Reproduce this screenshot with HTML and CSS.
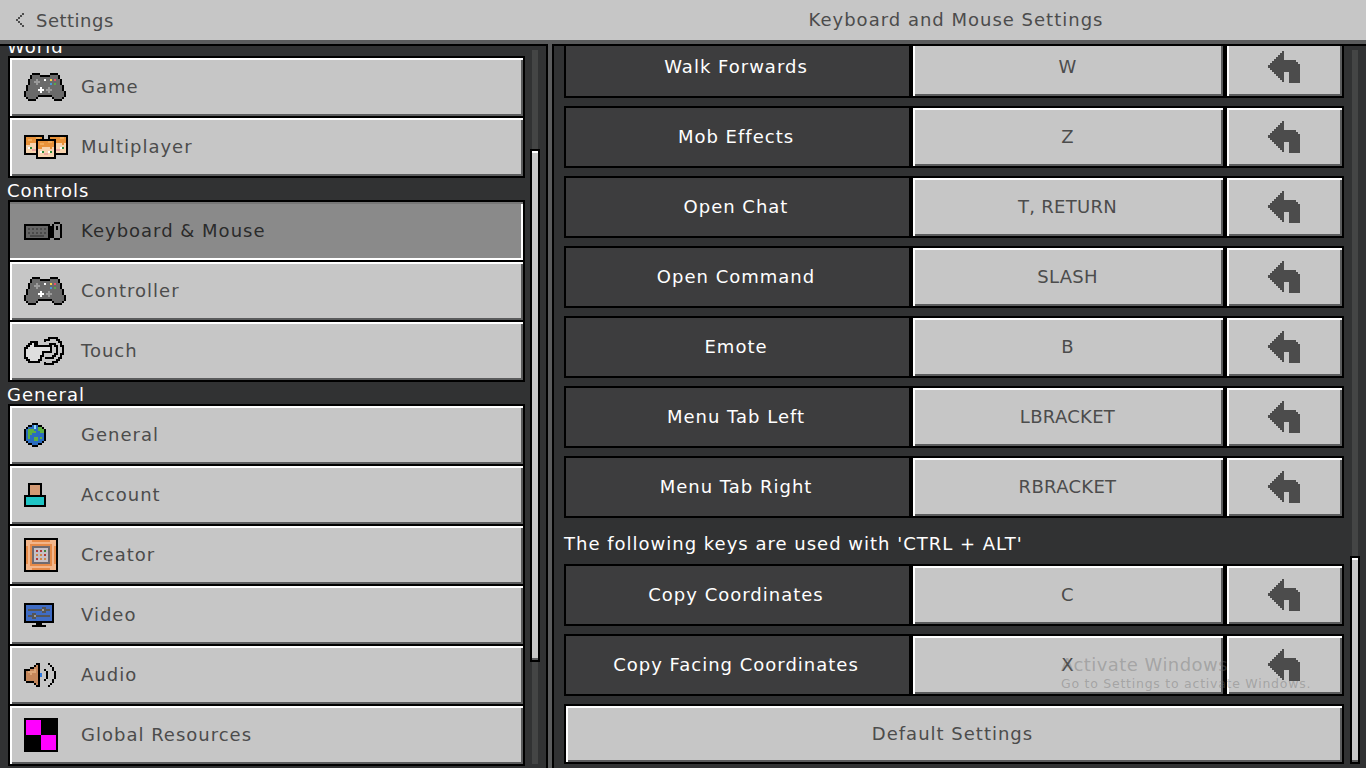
FILE: index.html
```html
<!DOCTYPE html>
<html lang="en">
<head>
<meta charset="utf-8">
<title>Keyboard and Mouse Settings</title>
<link rel="stylesheet" href="styles.css">
</head>
<body>
<svg class="defs" aria-hidden="true">
  <symbol id="pad" viewBox="0 0 21 14">
    <path fill="#000" d="M4 0H8V1H13V0H17V1H18V3H19V6H20V9H21V12H20V13H19V14H15V13H14V12H7V13H6V14H2V13H1V12H0V9H1V6H2V3H3V1H4Z"/>
    <path fill="#6a6a6a" d="M4 1H8V2H13V1H17V3H18V6H19V9H20V12H19V13H15V12H14V11H7V12H6V13H2V12H1V9H2V6H3V3H4Z"/>
    <path fill="#9a9a9a" d="M6 3H7V4H8V5H7V6H6V5H5V4H6ZM12 7H13V8H14V9H13V10H12V9H11V8H12Z"/>
    <path fill="#fff" d="M8 7H9V8H10V9H9V10H8V9H7V8H8ZM10 3H11V4H10Z"/>
    <path fill="#f4d84a" d="M13 3H14V4H13Z"/>
    <path fill="#e8506a" d="M15 3H16V4H15Z"/>
    <path fill="#4a9ad8" d="M13 5H14V6H13Z"/>
    <path fill="#5aa84a" d="M15 5H16V6H15Z"/>
  </symbol>
  <symbol id="alex" viewBox="0 0 10 10">
    <path fill="#000" d="M0 0H10V10H0Z"/>
    <path fill="#f7d3ae" d="M1 1H9V9H1Z"/>
    <path fill="#e8923a" d="M1 1H9V4H8V5H7V4H3V5H1Z"/>
    <path fill="#f2ac5a" d="M2 2H4V3H2ZM6 1H8V2H6Z"/>
    <path fill="#fff" d="M2 6H3V7H2ZM6 6H7V7H6Z"/>
    <path fill="#2f8a3c" d="M3 6H4V7H3ZM7 6H8V7H7Z"/>
    <path fill="#eba7a0" d="M4 7H6V8H4Z"/>
  </symbol>
  <symbol id="back" viewBox="0 0 32 32">
    <path d="M0 14H2V12H4V10H6V8H8V6H10V4H12V2H14V0H16V9H28V11H30V13H32V32H21V21H16V31H14V29H12V27H10V25H8V23H6V21H4V19H2V17H0Z"/>
  </symbol>
</svg>

<header class="topbar">
  <div class="topbar-back">
    <svg class="chevron" viewBox="0 0 8 14"><path d="M6 0H8V2H6V4H4V6H2V8H4V10H6V12H8V14H6V12H4V10H2V8H0V6H2V4H4V2H6Z"/></svg>
    <span>Settings</span>
  </div>
  <div class="topbar-title">Keyboard and Mouse Settings</div>
</header>

<main class="panels">
  <aside class="sidebar">
    <div class="sidebar-scroll">
      <div class="group-label">World</div>
      <div class="group">
        <div class="nav"><span class="nav-icon"><svg class="i-pad"><use href="#pad"/></svg></span>Game</div>
        <div class="nav"><span class="nav-icon"><svg class="i-faces" viewBox="0 0 22 12"><use href="#alex" x="0" y="0" width="10" height="10"/><use href="#alex" x="12" y="0" width="10" height="10"/><use href="#alex" x="6" y="2" width="10" height="10"/></svg></span>Multiplayer</div>
      </div>
      <div class="group-label">Controls</div>
      <div class="group">
        <div class="nav nav-active"><span class="nav-icon"><svg class="i-keys" viewBox="0 0 38 18">
          <path fill="#000" d="M0 2H26V18H0ZM26 4H28V16H26ZM30 0H36V2H38V16H36V18H30V16H28V2H30Z"/>
          <path fill="#666" d="M2 4H24V16H2Z"/>
          <path fill="#4a4a4a" d="M4 6H6V8H4ZM8 6H10V8H8ZM12 6H14V8H12ZM16 6H18V8H16ZM20 6H22V8H20ZM4 10H6V12H4ZM8 10H10V12H8ZM12 10H14V12H12ZM16 10H18V12H16ZM20 10H22V12H20ZM6 13H20V15H6Z"/>
          <path fill="#8c8c8c" d="M30 2H36V16H30Z"/>
          <path fill="#000" d="M32 4H34V8H32Z"/>
        </svg></span>Keyboard &amp; Mouse</div>
        <div class="nav"><span class="nav-icon"><svg class="i-pad"><use href="#pad"/></svg></span>Controller</div>
        <div class="nav"><span class="nav-icon"><svg class="i-touch" viewBox="0 0 20 14">
          <path fill="#dedede" stroke="#000" d="M.5 7.500V5.500H1.500V4.500H2.500V3.500H3.500V2.500H6.500V3.500H5.500V4.500H13.500V7.500H9.500V9.500H8.500V11.500H7.500V12.500H2.500V11.500H1.500V10.500H.5Z"/>
          <path fill="none" stroke="#000" d="M10.500 2.500V1.500H12.500V.5H16.500V1.500H17.500V2.500H18.500V4.500H19.500V8.500H18.500V10.500H17.500V11.500H16.500V12.500H14.500V13.500H10.500V12.500M12.500 3.500H15.500V4.500H16.500V8.500H15.500V9.500H14.500V10.500H10.500"/>
        </svg></span>Touch</div>
      </div>
      <div class="group-label">General</div>
      <div class="group">
        <div class="nav"><span class="nav-icon"><svg class="i-globe" viewBox="0 0 11 12">
          <path fill="#000" d="M4 0H7V1H9V2H10V3H11V9H10V10H9V11H7V12H4V11H2V10H1V9H0V3H1V2H2V1H4Z"/>
          <path fill="#2a6cc0" d="M4 1H7V2H9V3H10V9H9V10H7V11H4V10H2V9H1V3H2V2H4Z"/>
          <path fill="#5cb040" d="M2 3H5V4H6V5H4V6H3V8H2ZM7 2H9V3H10V5H8V4H7ZM5 7H7V9H5ZM8 7H9V8H8Z"/>
          <path fill="#8fdcf4" d="M5 1H6V3H5Z"/>
        </svg></span>General</div>
        <div class="nav"><span class="nav-icon"><svg class="i-acct" viewBox="0 0 11 12">
          <path fill="#000" d="M2 0H9V6H11V12H0V6H2Z"/>
          <path fill="#d39a74" d="M3 1H8V6H3Z"/>
          <path fill="#1fc4c4" d="M1 7H10V11H1Z"/>
        </svg></span>Account</div>
        <div class="nav"><span class="nav-icon"><svg class="i-square" viewBox="0 0 17 17">
          <path fill="#000" d="M0 0H17V17H0Z"/>
          <path fill="#e58a48" d="M1 1H16V16H1Z"/>
          <path fill="#f2b58a" d="M1 1H4V2H13V1H16V4H15V13H16V16H13V15H4V16H1V13H2V4H1Z"/>
          <path fill="#e58a48" d="M3 3H14V14H3Z"/>
          <path fill="#6f6a6f" d="M4 4H13V13H4Z"/>
          <path fill="#c6c0c6" d="M5 5H12V12H5Z"/>
          <path fill="#b03a3a" d="M6 6H7V7H6ZM8 6H9V7H8ZM10 8H11V9H10ZM6 10H7V11H6Z"/>
          <path fill="#3f8a3f" d="M10 6H11V7H10Z"/>
          <path fill="#d08a4a" d="M6 8H7V9H6ZM8 8H9V9H8ZM8 10H9V11H8ZM10 10H11V11H10Z"/>
        </svg></span>Creator</div>
        <div class="nav"><span class="nav-icon"><svg class="i-video" viewBox="0 0 15 12">
          <path fill="#000" d="M0 0H15V10H9V11H11V12H4V11H6V10H0Z"/>
          <path fill="#3f6cc4" d="M1 1H14V9H1Z"/>
          <path fill="#555" d="M2 3H13V4H2ZM2 6H13V7H2Z"/>
          <path fill="#555" d="M9 2H11V5H9ZM4 5H6V8H4Z"/>
          <path fill="#9a9a9a" d="M9 3H10V4H9ZM5 6H6V7H5Z"/>
        </svg></span>Video</div>
        <div class="nav"><span class="nav-icon"><svg class="i-audio" viewBox="0 0 16 12">
          <path fill="#000" d="M6 0H8V12H6V11H5V10H1V9H0V3H1V3H3V2H5V1H6Z"/>
          <path fill="#c4865a" d="M6 1H7V11H6V10H5V9H1V4H3V3H5V2H6Z"/>
          <path fill="#dca678" d="M5 3H6V5H4V6H3V5H2V4H5Z"/>
          <path fill="#2f7ae0" d="M8 5H9V7H8Z"/>
          <path fill="#000" d="M10 3H11V4H12V8H11V9H10V8H11V4H10ZM12 0H13V1H14V2H15V4H16V8H15V10H14V11H13V12H12V11H13V10H14V8H15V4H14V2H13V1H12Z"/>
        </svg></span>Audio</div>
        <div class="nav"><span class="nav-icon"><svg class="i-square" viewBox="0 0 34 34">
          <path fill="#000" d="M0 0H34V34H0Z"/>
          <path fill="#ff00ff" d="M2 2H17V17H2ZM17 17H32V32H17Z"/>
        </svg></span>Global Resources</div>
      </div>
      <div class="group-label group-label-tight">Add-Ons</div>
    </div>
    <div class="scrollbar"><div class="track"><div class="thumb thumb-left"></div></div></div>
  </aside>

  <section class="content">
    <div class="content-scroll">
      <div class="row"><div class="row-name">Walk Forwards</div><div class="cell key">W</div><div class="cell"><svg class="i-back"><use href="#back"/></svg></div></div>
      <div class="row"><div class="row-name">Mob Effects</div><div class="cell key">Z</div><div class="cell"><svg class="i-back"><use href="#back"/></svg></div></div>
      <div class="row"><div class="row-name">Open Chat</div><div class="cell key">T, RETURN</div><div class="cell"><svg class="i-back"><use href="#back"/></svg></div></div>
      <div class="row"><div class="row-name">Open Command</div><div class="cell key">SLASH</div><div class="cell"><svg class="i-back"><use href="#back"/></svg></div></div>
      <div class="row"><div class="row-name">Emote</div><div class="cell key">B</div><div class="cell"><svg class="i-back"><use href="#back"/></svg></div></div>
      <div class="row"><div class="row-name">Menu Tab Left</div><div class="cell key">LBRACKET</div><div class="cell"><svg class="i-back"><use href="#back"/></svg></div></div>
      <div class="row"><div class="row-name">Menu Tab Right</div><div class="cell key">RBRACKET</div><div class="cell"><svg class="i-back"><use href="#back"/></svg></div></div>
      <div class="note">The following keys are used with 'CTRL + ALT'</div>
      <div class="row"><div class="row-name">Copy Coordinates</div><div class="cell key">C</div><div class="cell"><svg class="i-back"><use href="#back"/></svg></div></div>
      <div class="row"><div class="row-name">Copy Facing Coordinates</div><div class="cell key">X</div><div class="cell"><svg class="i-back"><use href="#back"/></svg></div></div>
      <div class="default-btn"><div class="cell">Default Settings</div></div>
    </div>
    <div class="scrollbar"><div class="track"><div class="thumb thumb-right"></div></div></div>
  </section>
</main>

<div class="watermark">
  <div class="wm-big">Activate Windows</div>
  <div class="wm-small">Go to Settings to activate Windows.</div>
</div>
</body>
</html>
```

FILE: styles.css
```css
* { box-sizing: border-box; }
html, body { margin: 0; height: 100%; }
body {
  width: 1366px;
  height: 768px;
  overflow: hidden;
  position: relative;
  display: flex;
  flex-direction: column;
  background: #5a5b5c;
  font-family: "DejaVu Sans", sans-serif;
  font-size: 18px;
  letter-spacing: 1px;
  color: #4c4c4c;
}
svg { display: block; shape-rendering: crispEdges; }
.defs { width: 0; height: 0; position: absolute; }

.topbar {
  flex: none;
  height: 44px;
  display: flex;
  background: #c6c6c6;
  border-bottom: 4px solid #5a5b5c;
}
.topbar-back {
  width: 554px;
  padding-left: 16px;
  display: flex;
  align-items: center;
  gap: 12px;
  letter-spacing: 0.5px;
}
.chevron { width: 8px; height: 14px; fill: #4c4c4c; }
.topbar-title { flex: 1; padding-right: 8px; text-align: center; line-height: 40px; }

.panels { flex: 1; min-height: 0; display: flex; gap: 4px; }

.sidebar, .content {
  display: flex;
  min-height: 0;
  overflow: hidden;
  background: #313233;
  border-top: 2px solid #000;
}
.sidebar { width: 548px; border-right: 2px solid #000; }
.content { flex: 1; border-left: 2px solid #000; }

.sidebar-scroll { width: 530px; margin-top: -12px; padding-left: 8px; flex: none; }
.group-label { height: 22px; padding-top: 2px; line-height: 22px; margin-left: -1px; color: #fff; }
.group-label-tight { line-height: 16px; }
.group {
  width: 517px;
  border: 2px solid #000;
  border-width: 2px 2px 0 2px;
}
.nav {
  height: 60px;
  display: flex;
  align-items: center;
  background: #c6c6c6;
  border-bottom: 2px solid #000;
  box-shadow: inset 2px 2px 0 #fff, inset -2px -2px 0 #5a5b5c;
  padding-bottom: 2px;
}
.nav-active {
  background: #8a8a8a;
  color: #2b2b2b;
  box-shadow: inset 0 2px 0 #777, inset -2px 0 0 #fff, inset 0 -2px 0 #fff;
}
.nav-icon { width: 71px; margin-top: 2px; padding-left: 14px; flex: none; display: flex; }

.i-pad { width: 42px; height: 28px; }
.i-faces { width: 44px; height: 24px; }
.i-keys { width: 38px; height: 18px; }
.i-touch { width: 40px; height: 28px; }
.i-globe { width: 22px; height: 24px; }
.i-acct { width: 22px; height: 24px; }
.i-square { width: 34px; height: 34px; }
.i-video { width: 30px; height: 24px; }
.i-audio { width: 32px; height: 24px; }
.i-back { width: 32px; height: 32px; margin: 2px 0 0 0; fill: #4c4c4c; }

.scrollbar { flex: none; width: 6px; padding-top: 4px; }
.track { position: relative; width: 6px; height: 714px; background: #444545; }
.sidebar .scrollbar { margin-left: 2px; }
.content .scrollbar { margin-left: 8px; }
.thumb {
  position: absolute;
  left: -2px;
  width: 10px;
  background: #c6c6c6;
  border: 2px solid #000;
  box-shadow: inset 0 2px 0 #fff, inset 0 -2px 0 #5a5b5c;
}
.thumb-left { top: 99px; height: 513px; }
.thumb-right { top: 506px; height: 208px; }

.content-scroll { width: 790px; margin-top: -10px; padding-left: 10px; flex: none; }
.row {
  height: 62px;
  margin-bottom: 8px;
  display: grid;
  grid-template-columns: 343px 310px 115px;
  column-gap: 4px;
  background: #000;
  border: 2px solid #000;
}
.row-name {
  display: flex;
  align-items: center;
  justify-content: center;
  background: #3d3d3e;
  color: #fff;
  padding: 0 3px 2px 0;
}
.cell {
  display: flex;
  align-items: center;
  justify-content: center;
  background: #c6c6c6;
  box-shadow: inset 2px 2px 0 #fff, inset -2px -2px 0 #5a5b5c;
  padding: 0 1px 2px 0;
}
.key { letter-spacing: 0.3px; }
.note { height: 46px; margin-top: -8px; padding-top: 7px; line-height: 38px; color: #fff; }
.default-btn { height: 60px; display: flex; border: 2px solid #000; }
.default-btn .cell { flex: 1; padding-right: 3px; }

.watermark {
  position: absolute;
  left: 1061px;
  top: 654px;
  color: rgba(110, 110, 110, 0.4);
  white-space: nowrap;
}
.wm-big { font-size: 18px; line-height: 22px; letter-spacing: 0.45px; }
.wm-small { font-size: 12.5px; line-height: 16px; letter-spacing: 0.75px; }
```
